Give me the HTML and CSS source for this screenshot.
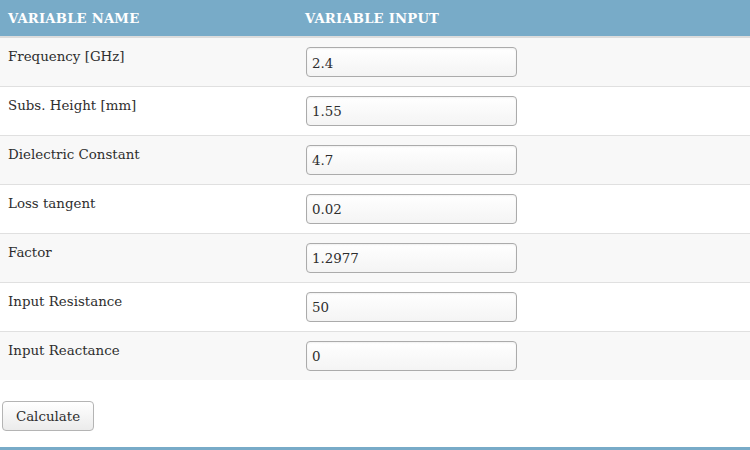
FILE: index.html
```html
<!DOCTYPE html>
<html>
<head>
<meta charset="utf-8">
<link rel="stylesheet" href="styles.css">
</head>
<body>
<table class="vars">
  <thead>
    <tr><th class="col-name">Variable Name</th><th class="col-input">Variable Input</th></tr>
  </thead>
  <tbody>
    <tr><td class="label">Frequency [GHz]</td><td class="cell"><input class="field" type="text" value="2.4"></td></tr>
    <tr><td class="label">Subs. Height [mm]</td><td class="cell"><input class="field" type="text" value="1.55"></td></tr>
    <tr><td class="label">Dielectric Constant</td><td class="cell"><input class="field" type="text" value="4.7"></td></tr>
    <tr><td class="label">Loss tangent</td><td class="cell"><input class="field" type="text" value="0.02"></td></tr>
    <tr><td class="label">Factor</td><td class="cell"><input class="field" type="text" value="1.2977"></td></tr>
    <tr><td class="label">Input Resistance</td><td class="cell"><input class="field" type="text" value="50"></td></tr>
    <tr><td class="label">Input Reactance</td><td class="cell"><input class="field" type="text" value="0"></td></tr>
  </tbody>
</table>
<div class="actions">
  <button class="btn" type="button">Calculate</button>
</div>
<div class="footer-bar"></div>
</body>
</html>
```
FILE: styles.css
```css
html, body {
  margin: 0;
  padding: 0;
  background: #ffffff;
}
body {
  font-family: "DejaVu Serif", serif;
  font-size: 13.4px;
  color: #2e2e2e;
  width: 750px;
  height: 450px;
  overflow: hidden;
}
.vars {
  width: 750px;
  border-collapse: collapse;
}
.vars th {
  background: #78abc8;
  color: #ffffff;
  text-transform: uppercase;
  text-align: left;
  font-weight: bold;
  font-size: 13.2px;
  height: 36px;
  padding: 0 8px;
  border-bottom: 2px solid #dcdcdc;
  letter-spacing: 0.2px;
}
.vars th.col-name { width: 282px; }
.vars th.col-input { padding-left: 7px; }
.vars td {
  vertical-align: top;
  border-bottom: 1px solid #e0e0e0;
  height: 49px;
  padding: 0;
  box-sizing: border-box;
}
.vars tbody tr:nth-child(odd) td { background: #f8f8f8; }
.vars tbody tr:last-child td { border-bottom: none; height: 49px; }
.label {
  padding: 10px 8px 0 8px !important;
  line-height: 18px;
}
.cell {
  padding: 9px 0 0 8px !important;
}
.field {
  display: block;
  box-sizing: border-box;
  width: 211px;
  height: 30px;
  margin: 0;
  padding: 2px 5px 0 5px;
  border: 1px solid #ababab;
  border-radius: 4px;
  background: linear-gradient(#ffffff, #f4f4f4);
  box-shadow: inset 0 1px 2px rgba(0,0,0,0.06);
  font-family: "DejaVu Serif", serif;
  font-size: 13.4px;
  color: #2e2e2e;
  outline: none;
}
.actions {
  padding: 21px 2px 0 2px;
  height: 51px;
  box-sizing: border-box;
}
.btn {
  box-sizing: border-box;
  width: 92px;
  height: 30px;
  border: 1px solid #b4b4b4;
  border-radius: 4px;
  background: linear-gradient(#ffffff, #ebebeb);
  font-family: "DejaVu Serif", serif;
  font-size: 13.4px;
  color: #2e2e2e;
  padding: 0;
}
.footer-bar {
  margin-top: 16px;
  height: 6px;
  background: #78abc8;
}
```
